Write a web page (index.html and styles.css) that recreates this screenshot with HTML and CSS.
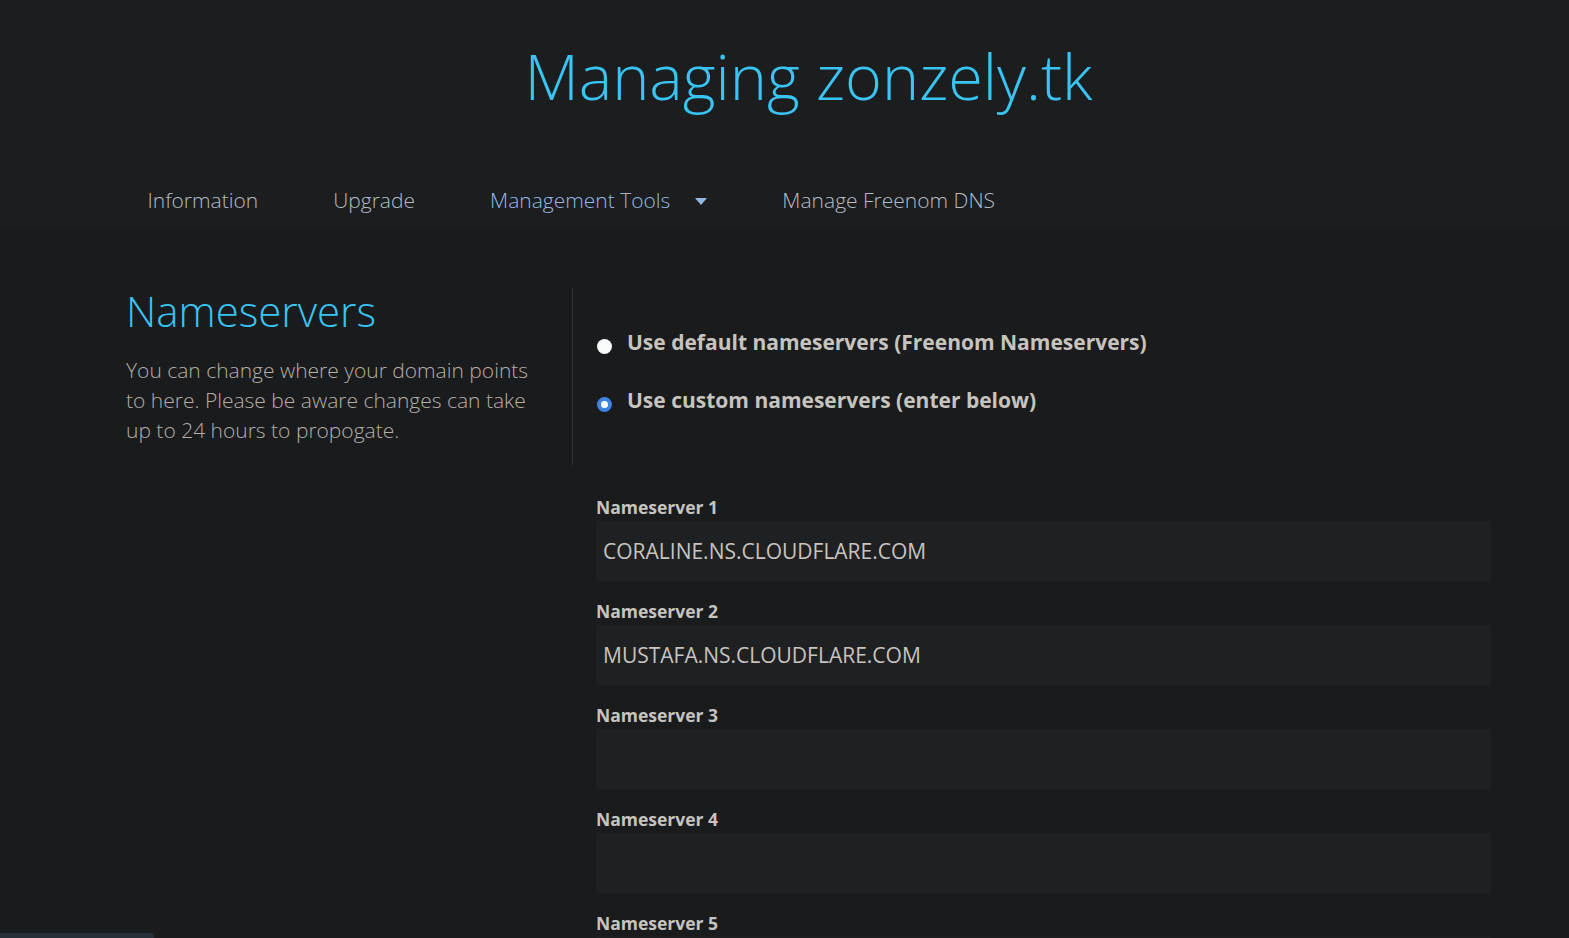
FILE: index.html
```html
<!DOCTYPE html>
<html lang="en">
<head>
<meta charset="utf-8">
<title>Managing zonzely.tk</title>
<link rel="stylesheet" href="styles.css">
</head>
<body>
<header class="top">
  <h1 class="title">Managing zonzely.tk</h1>
  <nav class="nav">
    <a class="nav-item">Information</a>
    <a class="nav-item">Upgrade</a>
    <a class="nav-item nav-active">Management Tools <span class="caret"></span></a>
    <a class="nav-item">Manage Freenom DNS</a>
  </nav>
</header>
<main class="content">
  <section class="intro">
    <h2 class="intro-title">Nameservers</h2>
    <p class="intro-text">You can change where your domain points to here. Please be aware changes can take up to 24 hours to propogate.</p>
  </section>
  <section class="form">
    <div class="choices">
      <label class="choice"><span class="radio"></span>Use default nameservers (Freenom Nameservers)</label>
      <label class="choice"><span class="radio radio-on"></span>Use custom nameservers (enter below)</label>
    </div>
    <div class="fields">
      <div class="field"><div class="field-label">Nameserver 1</div><div class="field-input">CORALINE.NS.CLOUDFLARE.COM</div></div>
      <div class="field"><div class="field-label">Nameserver 2</div><div class="field-input">MUSTAFA.NS.CLOUDFLARE.COM</div></div>
      <div class="field"><div class="field-label">Nameserver 3</div><div class="field-input"></div></div>
      <div class="field"><div class="field-label">Nameserver 4</div><div class="field-input"></div></div>
      <div class="field"><div class="field-label">Nameserver 5</div><div class="field-input"></div></div>
    </div>
  </section>
</main>
<div class="status-bar"></div>
</body>
</html>
```
FILE: styles.css
```css
html, body {
  margin: 0;
  padding: 0;
  height: 100%;
  overflow: hidden;
}
body {
  background: #1a1b1d;
  font-family: "Open Sans", "Liberation Sans", sans-serif;
  color: #c4c4c4;
}
.top {
  background: #1c1d1e;
  height: 230px;
  box-sizing: border-box;
  padding-top: 38px;
}
.title {
  margin: 0;
  text-align: center;
  font-weight: 300;
  font-size: 63px;
  line-height: 76px;
  color: #38c5f4;
  padding-left: 48px;
}
.nav {
  display: flex;
  padding-left: 110px;
  margin-top: 71px;
}
.nav-item {
  font-size: 21px;
  font-weight: 300;
  line-height: 30px;
  color: #b4bcc3;
  padding: 0 37.5px;
  display: flex;
  align-items: center;
}
.nav-active {
  color: #93b9e3;
}
.caret {
  display: inline-block;
  width: 0;
  height: 0;
  border-left: 6px solid transparent;
  border-right: 6px solid transparent;
  border-top: 7px solid #93b9e3;
  margin-left: 25px;
  margin-top: 2px;
}
.content {
  display: flex;
  padding-left: 126px;
  padding-top: 58px;
}
.intro {
  width: 447px;
  border-right: 1px solid #303234;
  height: 177px;
  box-sizing: border-box;
  padding-right: 30px;
}
.intro-title {
  margin: 0;
  font-weight: 300;
  font-size: 42px;
  line-height: 46px;
  color: #38c5f4;
}
.intro-text {
  margin: 21px 0 0;
  max-width: 410px;
  font-size: 21px;
  font-weight: 300;
  line-height: 30px;
  color: #b4aea8;
}
.form {
  padding-left: 23px;
  width: 895px;
}
.choices {
  padding-top: 40px;
  display: flex;
  flex-direction: column;
  gap: 30px;
}
.choice {
  display: flex;
  align-items: center;
  font-size: 21px;
  font-weight: 700;
  line-height: 28px;
  color: #c7c3bf;
}
.radio {
  width: 15px;
  height: 15px;
  border-radius: 50%;
  background: #fafafa;
  margin-right: 15px;
  margin-left: 1px;
  margin-top: 8px;
  box-sizing: border-box;
}
.radio-on {
  background: #fff;
  border: 4px solid #3d84e0;
}
.fields {
  margin-top: 81px;
  display: flex;
  flex-direction: column;
  gap: 18px;
}
.field-label {
  font-size: 17.5px;
  font-weight: 700;
  line-height: 24px;
  color: #c7c3bf;
  margin-bottom: 2px;
}
.field-input {
  height: 60px;
  background: #1f2022;
  font-size: 21px;
  line-height: 60px;
  padding-left: 7px;
  color: #c7c3bf;
}
.status-bar {
  position: fixed;
  left: 0;
  bottom: 0;
  width: 154px;
  height: 5px;
  background: #263036;
  border-top-right-radius: 3px;
}
```
